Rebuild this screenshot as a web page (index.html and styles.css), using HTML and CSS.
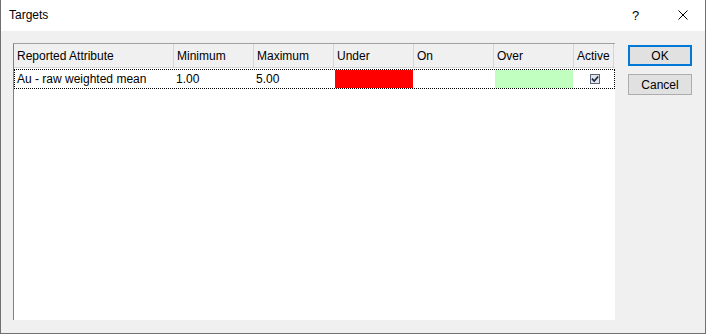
FILE: index.html
```html
<!DOCTYPE html>
<html lang="en">
<head>
  <meta charset="UTF-8" />
  <title>Targets</title>
  <link rel="stylesheet" href="styles.css">
</head>
<body>

  <div class="window">
    <div class="titlebar">
      <span class="title">Targets</span>
      <span class="help">?</span>
      <span class="close">
        <svg width="10" height="10" viewBox="0 0 10 10">
          <path d="M0.5 0.5 L9.5 9.5 M9.5 0.5 L0.5 9.5" stroke="#000" stroke-width="1" fill="none" />
        </svg>
      </span>
    </div>

    <div class="content">
      <div class="list">
        <div class="list-head">
          <div class="col col-attr">Reported Attribute</div>
          <div class="col">Minimum</div>
          <div class="col">Maximum</div>
          <div class="col">Under</div>
          <div class="col">On</div>
          <div class="col">Over</div>
          <div class="col col-active">Active</div>
        </div>

        <div class="list-row">
          <div class="cell">Au - raw weighted mean</div>
          <div class="cell">1.00</div>
          <div class="cell">5.00</div>
          <div class="cell"><span class="swatch under"></span></div>
          <div class="cell"></div>
          <div class="cell"><span class="swatch over"></span></div>
          <div class="cell cell-check">
            <svg width="10" height="10" viewBox="0 0 10 10">
              <rect x="0.5" y="0.5" width="9" height="9" fill="#dfe4ec" stroke="#5a6478" />
              <path d="M2 4.6 L4.2 7 L8.2 2.4" stroke="#1c2438" stroke-width="1.6" fill="none" />
            </svg>
          </div>
        </div>
      </div>

      <div class="buttons">
        <button class="btn btn-default">OK</button>
        <button class="btn">Cancel</button>
      </div>
    </div>
  </div>

</body>
</html>
```

FILE: styles.css
```css
body {
  margin: 0;
  font-family: 'Liberation Sans', Arial, sans-serif;
  font-size: 12px;
  color: #000;
  background: #f0f0f0;
}

.window {
  width: 706px;
  height: 334px;
  box-sizing: border-box;
  border: 1px solid #707070;
  border-top: none;
  background: #f0f0f0;
}

.titlebar {
  height: 31px;
  background: #fff;
  display: flex;
  align-items: center;
}

.title {
  flex: 1;
  padding-left: 8px;
  padding-bottom: 1px;
}

.help {
  width: 14px;
  margin-right: 32px;
  font-size: 13px;
}

.close {
  display: flex;
  margin-right: 17px;
  padding-bottom: 1px;
}

.content {
  display: flex;
  align-items: flex-start;
  padding: 12px 0 0 12px;
}

.list {
  width: 602px;
  height: 277px;
  box-sizing: border-box;
  background: #fff;
  border-top: 1px solid #a0a0a0;
  border-left: 1px solid #828282;
}

.list-head,
.list-row {
  display: grid;
  grid-template-columns: 159px 80px 80px 80px 80px 80px 41px;
}

.list-head {
  height: 23px;
  background: #f0f0f0;
  border-bottom: 1px solid #d5d5d5;
}

.col {
  display: flex;
  align-items: center;
  padding-left: 3px;
  padding-top: 1px;
  border-left: 1px solid #d5d5d5;
}

.col-attr {
  border-left: none;
}

.col-active {
  border-right: 1px solid #d5d5d5;
}

.list-row {
  height: 20px;
  margin-top: 1px;
  box-sizing: border-box;
  border: 1px dotted #000;
}

.cell {
  display: flex;
  align-items: center;
  padding-left: 2px;
  padding-bottom: 1px;
}

.swatch {
  display: block;
  width: 78px;
  height: 18px;
  margin-left: -1px;
  margin-bottom: -1px;
}

.under {
  background: #ff0000;
}

.over {
  background: #c0ffc0;
}

.cell-check {
  justify-content: center;
  padding-left: 0;
  padding-bottom: 0;
}

.buttons {
  display: flex;
  flex-direction: column;
  gap: 8px;
  margin-left: 13px;
  margin-top: 2px;
}

.btn {
  width: 64px;
  height: 21px;
  padding: 0;
  font-family: inherit;
  font-size: 12px;
  color: #000;
  background: #e1e1e1;
  border: 1px solid #adadad;
}

.btn-default {
  border: 2px solid #0078d7;
}
```
